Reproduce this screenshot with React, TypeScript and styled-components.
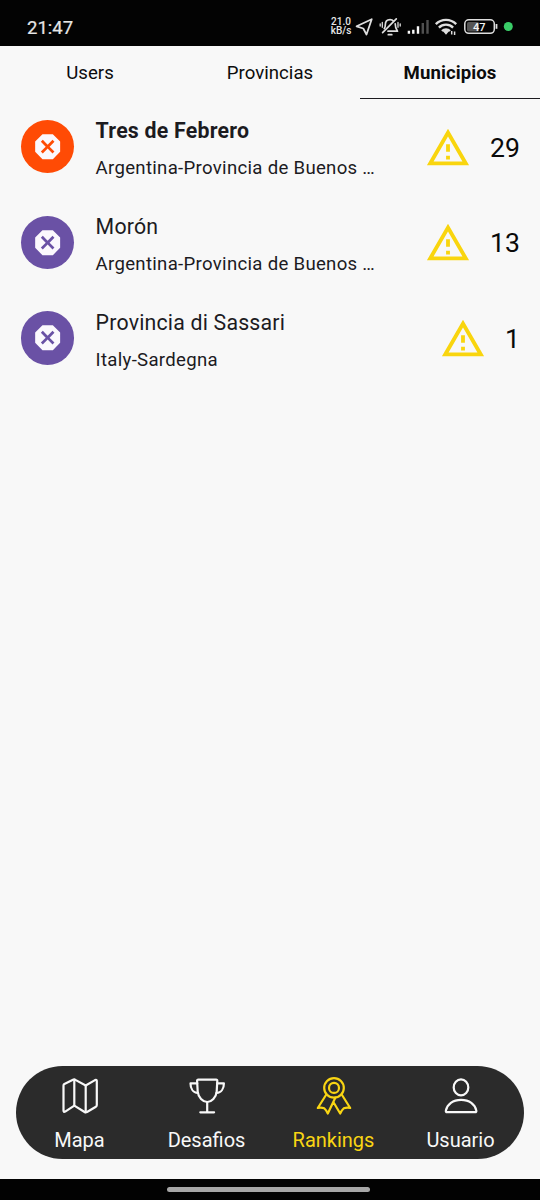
import React from "react";
import styled, { createGlobalStyle } from "styled-components";

const GlobalStyle = createGlobalStyle`
  * { box-sizing: border-box; }
  body { margin: 0; background: #f8f8f8; font-family: Roboto, sans-serif; }
`;

const Screen = styled.div`
  display: flex;
  flex-direction: column;
  width: 540px;
  height: 1200px;
  overflow: hidden;
  background: #f8f8f8;
  color: #1c1b1f;
`;

const StatusBar = styled.header`
  flex: none;
  display: flex;
  align-items: center;
  justify-content: space-between;
  height: 46px;
  padding: 8px 24px 0 27px;
  background: #030303;
  color: #e6e6e6;
`;

const Clock = styled.span`
  padding-top: 1px;
  font-size: 18.5px;
  line-height: 22px;
  -webkit-text-stroke: 0.2px currentColor;
`;

const StatusIcons = styled.div`
  display: flex;
  align-items: center;
  height: 22px;
  svg { display: block; }
`;

const Speed = styled.div`
  width: 22px;
  margin-right: 2px;
  font-size: 10px;
  line-height: 8.8px;
  font-weight: 500;
  text-align: center;
  white-space: nowrap;
`;

const Tabs = styled.nav`
  flex: none;
  display: grid;
  grid-template-columns: repeat(3, 1fr);
  height: 53px;
`;

const Tab = styled.div<{ $active?: boolean }>`
  display: flex;
  justify-content: center;
  padding-top: 16px;
  border-bottom: 1px solid ${(p) => (p.$active ? "#1c1b1f" : "transparent")};
  color: #0c0c0c;
  font-size: 18.6px;
  line-height: 22px;
  letter-spacing: ${(p) => (p.$active ? "0.08px" : "0.03px")};
  font-weight: ${(p) => (p.$active ? 700 : 400)};
`;

const List = styled.main`
  flex: 1;
`;

const Row = styled.div`
  display: flex;
  align-items: center;
  height: 95.67px;
  padding: 0 20px 0 21px;
`;

const Avatar = styled.div<{ $color: string }>`
  flex: none;
  display: flex;
  align-items: center;
  justify-content: center;
  width: 53.3px;
  height: 53.3px;
  margin-right: 21.3px;
  border-radius: 50%;
  background: ${(p) => p.$color};
  color: #fbf8fd;
`;

const Labels = styled.div`
  flex: none;
  width: 290px;
  padding-top: 4px;
`;

const Title = styled.div<{ $bold?: boolean }>`
  font-size: 21.3px;
  line-height: 32px;
  letter-spacing: ${(p) => (p.$bold ? "0.23px" : "0.2px")};
  font-weight: ${(p) => (p.$bold ? 700 : 400)};
`;

const Subtitle = styled.div`
  margin-top: 8px;
  font-size: 18.6px;
  line-height: 27px;
  letter-spacing: 0.3px;
  white-space: nowrap;
`;

const Score = styled.div`
  flex: 1;
  display: flex;
  align-items: center;
  justify-content: flex-end;
  gap: 19px;
  padding-top: 2px;
  color: #0a0a0a;
  font-size: 26.6px;
  line-height: 32px;
  svg { display: block; }
`;

const BottomBar = styled.nav`
  flex: none;
  display: grid;
  grid-template-columns: repeat(4, 1fr);
  height: 93px;
  margin: 0 16px 20px;
  border-radius: 47px;
  background: #2b2b2b;
`;

const NavItem = styled.div<{ $active?: boolean }>`
  display: flex;
  flex-direction: column;
  align-items: center;
  padding-top: 10px;
  color: ${(p) => (p.$active ? "#f9d513" : "#f8f8f8")};
  font-size: 20px;
  line-height: 24px;
  gap: 12px;
`;

const NavIcon = styled.svg.attrs({ width: 40, height: 40, viewBox: "0 0 40 40" })`
  display: block;
  fill: none;
  stroke: currentColor;
  stroke-width: 2.2;
  stroke-linecap: round;
  stroke-linejoin: round;
`;

const GestureArea = styled.footer`
  flex: none;
  display: flex;
  justify-content: center;
  height: 21px;
  padding: 8px 4px 0 0;
  background: #020202;
`;

const GestureHandle = styled.div`
  width: 203px;
  height: 5px;
  border-radius: 3px;
  background: #a6a6a6;
`;

const DangerIcon = () => (
  <svg width="33.3" height="33.3" viewBox="0 0 24 24" fill="currentColor">
    <path d="M15.73 3H8.27L3 8.27v7.46L8.27 21h7.46L21 15.73V8.27L15.73 3zM16.900 15.500L15.500 16.900 12 13.400 8.500 16.900 7.100 15.500 10.600 12 7.100 8.500 8.500 7.100 12 10.600 15.500 7.100 16.900 8.500 13.400 12 16.900 15.500z" />
  </svg>
);

const WarningIcon = () => (
  <svg width="46" height="46" viewBox="0 0 24 24" fill="#f9d50e">
    <path d="M12 5.99L19.53 19H4.47L12 5.99M12 2L1 21h22L12 2zm1 14h-2v2h2v-2zm0-6h-2v4h2v-4z" />
  </svg>
);

const StatusGlyphs = () => (
  <svg width="162" height="24" viewBox="354 15 162 24" fill="none" stroke="#dedede">
    <path d="M371.7 19.2 356.6 26.3 363.3 28.5 366.5 34.5Z" strokeWidth="1.8" strokeLinejoin="round" />
    <g strokeWidth="1.7" strokeLinecap="round" strokeLinejoin="round">
      <path d="M384.300 28.500c.9-1.200 1-2.200 1-3.500 0-3.300 2-5.300 4.800-5.300 1.500 0 2.600.5 3.400 1.400M395.200 23.800c0 2.800.400 4.800 2.300 7.400h-9.500" />
      <path d="M396.300 18.800 382.600 32.700" />
      <path d="M388.300 34.700h3.500" />
      <path d="M382.300 22.500v4.800M380.200 23.800v2.300M398 22.500v4.800M400.200 23.800v2.300" strokeWidth="1.300" />
    </g>
    <g strokeWidth="2.4">
      <path d="M408.900 33.700v-3M413.300 33.700v-4M418 33.700v-7.500" stroke="#fafafa" />
      <path d="M422.800 33.700V23M427.500 33.700V20" stroke="#505050" />
    </g>
    <g strokeWidth="2.400">
      <path d="M435.800 24.100a14.500 14.500 0 0 1 20.400 0M438.900 27.600a10 10 0 0 1 14.200 0M442 31a5.700 5.700 0 0 1 8 0" />
      <path d="m442.800 31.100 3.200 3.600 3.200-3.600a4.500 4.500 0 0 0-6.400 0Z" fill="#dedede" stroke="none" />
      <path d="M451.700 31v3.500M454.600 31.500V35" strokeWidth="1.500" />
    </g>
    <rect x="467" y="22" width="12" height="9.500" rx="1.500" fill="#555" stroke="none" />
    <rect x="464.800" y="19.800" width="29.500" height="13.500" rx="4" strokeWidth="1.500" />
    <path d="M496.500 24v4.800" strokeWidth="1.800" />
    <text x="479.200" y="30.900" fill="#f4f4f4" stroke="none" fontFamily="Roboto, sans-serif" fontSize="11" fontWeight="500" textAnchor="middle">47</text>
    <circle cx="508.300" cy="26.500" r="4.500" fill="#3acd68" stroke="none" />
  </svg>
);

const MapIcon = () => (
  <NavIcon>
    <path d="M3.500 9.500Q3.500 8.500 4.400 7.900L13 3.700q1.300-.6 2.400.2L25.700 9.500 35 4.100q1.800-.8 1.800 1V29q0 1-.9 1.700L27 36q-1.300.7-2.400 0L14.300 29.600 5.200 35.600q-1.700.8-1.700-1Z" />
    <path d="M14.300 3.800v25.800M25.700 9.500v26.600" />
  </NavIcon>
);

const TrophyIcon = () => (
  <NavIcon>
    <path d="M11.300 3.600h17.800q1.300 0 1.200 1.300L29.700 15.500C29.200 21.500 24.500 26 20.200 26S11.200 21.500 10.700 15.500L10.100 4.900Q10 3.600 11.300 3.600Z" />
    <path d="M10.200 7.400H3.500c0 5 2.500 9.300 7.400 9.600M30.200 7.400h6.700c0 5-2.500 9.300-7.400 9.600M20.200 26v10.200M13.300 36.300h13.800" />
  </NavIcon>
);

const RibbonIcon = () => (
  <NavIcon>
    <circle cx="20" cy="11.900" r="9.800" />
    <circle cx="20" cy="11.900" r="5" />
    <path d="M12.300 18.500 3.800 32q3.600-.7 6.400.300 2 1.800 3.600 5.200L21.300 21.700M27.700 18.500 36.200 32q-3.600-.7-6.400.300-2 1.800-3.600 5.200L19.500 26.200" />
  </NavIcon>
);

const PersonIcon = () => (
  <NavIcon>
    <ellipse cx="20" cy="11.400" rx="7.300" ry="8" />
    <path d="M20.100 23.800c8.400 0 13.800 4.700 15.200 10.600q.4 1.800-1.300 1.800H6.200q-1.700 0-1.300-1.800C6.300 28.500 11.700 23.800 20.100 23.800Z" />
  </NavIcon>
);

const places = [
  { title: "Tres de Febrero", subtitle: "Argentina-Provincia de Buenos …", score: 29, color: "#ff4b05", bold: true },
  { title: "Morón", subtitle: "Argentina-Provincia de Buenos …", score: 13, color: "#6a51a5" },
  { title: "Provincia di Sassari", subtitle: "Italy-Sardegna", score: 1, color: "#6a51a5" },
];

export default function App() {
  return (
    <Screen>
      <GlobalStyle />
      <StatusBar>
        <Clock>21:47</Clock>
        <StatusIcons>
          <Speed>21.0<br />kB/s</Speed>
          <StatusGlyphs />
        </StatusIcons>
      </StatusBar>
      <Tabs>
        <Tab>Users</Tab>
        <Tab>Provincias</Tab>
        <Tab $active>Municipios</Tab>
      </Tabs>
      <List>
        {places.map((p) => (
          <Row key={p.title}>
            <Avatar $color={p.color}><DangerIcon /></Avatar>
            <Labels>
              <Title $bold={p.bold}>{p.title}</Title>
              <Subtitle>{p.subtitle}</Subtitle>
            </Labels>
            <Score><WarningIcon />{p.score}</Score>
          </Row>
        ))}
      </List>
      <BottomBar>
        <NavItem><MapIcon />Mapa</NavItem>
        <NavItem><TrophyIcon />Desafios</NavItem>
        <NavItem $active><RibbonIcon />Rankings</NavItem>
        <NavItem><PersonIcon />Usuario</NavItem>
      </BottomBar>
      <GestureArea><GestureHandle /></GestureArea>
    </Screen>
  );
}
